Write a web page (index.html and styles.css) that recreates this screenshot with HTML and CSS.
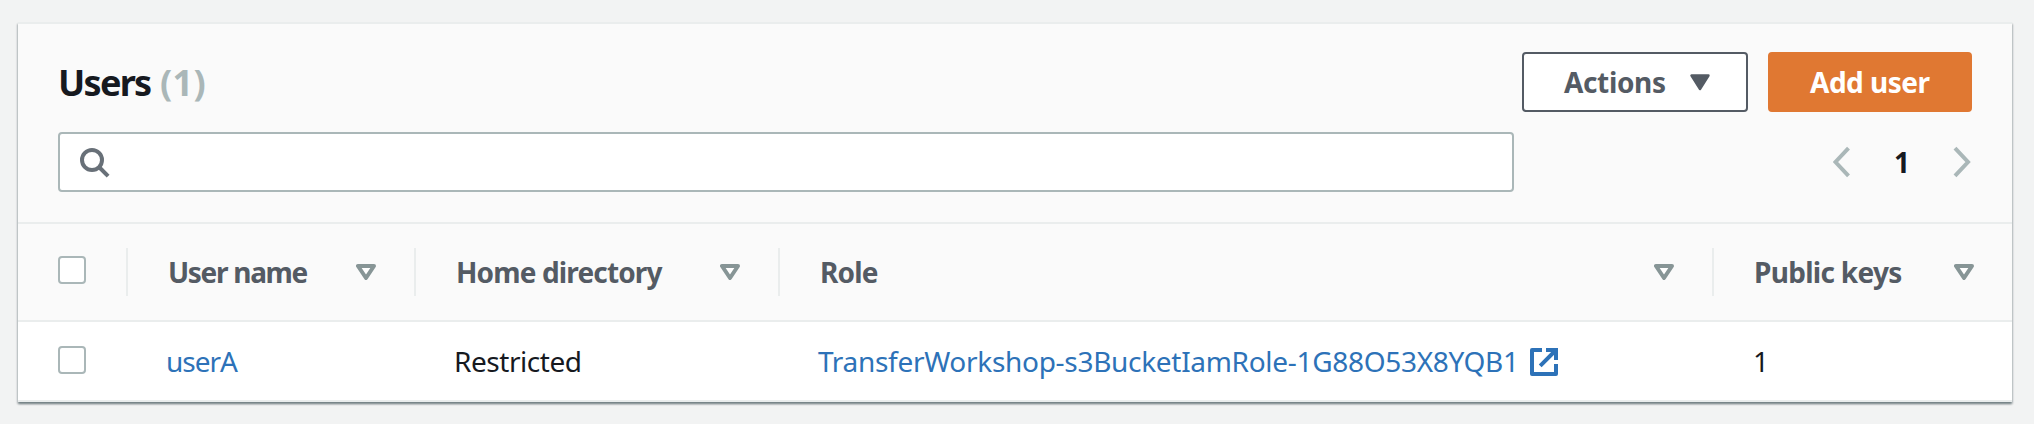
FILE: index.html
```html
<!DOCTYPE html>
<html lang="en">
<head>
<meta charset="utf-8">
<title>Users</title>
<link rel="stylesheet" href="styles.css">
</head>
<body>
<main class="card">
  <header class="card-header">
    <div class="title-row">
      <h2 class="title"><span class="title-text">Users</span><span class="count">(1)</span></h2>
      <div class="buttons">
        <button class="btn btn-normal"><span class="actions-label">Actions</span><svg class="caret" width="20" height="17" viewBox="0 0 20 17"><path d="M1.5 1.5h17L10 15z" fill="#545b64" stroke="#545b64" stroke-width="2.4" stroke-linejoin="round"/></svg></button>
        <button class="btn btn-primary"><span class="add-label">Add user</span></button>
      </div>
    </div>
    <div class="filter-row">
      <div class="search">
        <svg width="32" height="32" viewBox="0 0 32 32" fill="none" stroke="#687078" stroke-width="4"><circle cx="12" cy="12" r="10"/><path d="M19.5 19.5l8.6 8.6"/></svg>
      </div>
      <nav class="pagination">
        <svg width="18" height="32" viewBox="0 0 18 32" fill="none" stroke="#aab7b8" stroke-width="4"><path d="M15.5 2.2L2.5 16l13 13.8"/></svg>
        <span class="page">1</span>
        <svg width="18" height="32" viewBox="0 0 18 32" fill="none" stroke="#aab7b8" stroke-width="4"><path d="M2 2.2L15 16 2 29.8"/></svg>
      </nav>
    </div>
  </header>
  <section class="table">
    <div class="row head">
      <div class="cell check"><span class="checkbox"></span></div>
      <div class="cell"><span class="h-name">User name</span><svg class="sort" width="20" height="16" viewBox="0 0 20 16"><path d="M2 2h16l-8 12z"/></svg></div>
      <div class="cell"><span class="h-dir">Home directory</span><svg class="sort" width="20" height="16" viewBox="0 0 20 16"><path d="M2 2h16l-8 12z"/></svg></div>
      <div class="cell"><span class="h-role">Role</span><svg class="sort" width="20" height="16" viewBox="0 0 20 16"><path d="M2 2h16l-8 12z"/></svg></div>
      <div class="cell"><span class="h-keys">Public keys</span><svg class="sort" width="20" height="16" viewBox="0 0 20 16"><path d="M2 2h16l-8 12z"/></svg></div>
    </div>
    <div class="row body">
      <div class="cell check"><span class="checkbox"></span></div>
      <div class="cell"><a class="link user">userA</a></div>
      <div class="cell"><span class="dir">Restricted</span></div>
      <div class="cell"><a class="link role">TransferWorkshop-s3BucketIamRole-1G88O53X8YQB1</a><svg class="external" width="28" height="28" viewBox="0 0 28 28" fill="none" stroke="#2d72b8" stroke-width="4"><path d="M12 2H2v24h24V16" stroke-linejoin="round"/><path d="M16 2h10v10M26 2L10.2 17.8"/></svg></div>
      <div class="cell"><span class="keys">1</span></div>
    </div>
  </section>
</main>
</body>
</html>
```
FILE: styles.css
```css
* { box-sizing: border-box; }

body {
  margin: 0;
  padding: 22px 22px 22px 18px;
  background: #f2f3f3;
  color: #16191f;
  font: 400 28px/36px "Noto Sans", sans-serif;
}

svg { display: block; flex: none; }

.card {
  width: 1994px;
  height: 380px;
  background: #fff;
  border-top: 2px solid #eaeded;
  border-bottom: 2px solid #eaeded;
  box-shadow: 0 2px 2px 0 rgba(0, 28, 36, .4), 1px 2px 2px 0 rgba(0, 28, 36, .12), -1px 2px 2px 0 rgba(0, 28, 36, .12);
}

.card-header {
  height: 200px;
  padding: 28px 40px 0;
  background: #fafafa;
  border-bottom: 2px solid #eaeded;
}

.title-row, .filter-row, .buttons, .pagination, .btn, .cell { display: flex; align-items: center; }
.title-row, .filter-row { justify-content: space-between; }

.title {
  display: flex;
  margin: 0;
  padding-top: 2px;
  font-size: 36px;
  line-height: 58px;
}
.title-text { width: 102px; letter-spacing: -1.7px; }
.count { color: #aab7b8; letter-spacing: .4px; }

.buttons { gap: 20px; }
.btn {
  height: 60px;
  padding: 0 0 1px 40px;
  border: 2px solid #545b64;
  border-radius: 4px;
  background: #fff;
  color: #545b64;
  font: 700 28px/36px "Noto Sans", sans-serif;
}
.btn-normal { width: 226px; }
.actions-label { width: 126px; text-align: left; letter-spacing: -.35px; }
.caret { margin-top: 1px; }
.btn-primary {
  width: 204px;
  border-color: #e07832;
  background: #e07832;
  color: #fff;
}
.add-label { letter-spacing: -.5px; }

.filter-row { margin-top: 20px; }
.search {
  display: flex;
  align-items: center;
  width: 1456px;
  height: 60px;
  padding: 4px 20px 0;
  border: 2px solid #aab7b8;
  border-radius: 4px;
  background: #fff;
}
.pagination { padding-right: 1px; }
.page { width: 102px; padding: 0 0 1px 43px; font-weight: 700; }

.row {
  display: grid;
  grid-template-columns: 110px 288px 364px 934px 298px;
}
.head {
  height: 98px;
  background: #fafafa;
  border-bottom: 2px solid #eaeded;
  color: #545b64;
  font-weight: 700;
}
.body { height: 78px; }
.cell { position: relative; padding-left: 40px; white-space: nowrap; }
.head .cell { justify-content: space-between; padding: 0 40px 0 40px; }
.head .cell:last-child { padding-right: 38px; }
.head .cell:not(:last-child)::after {
  content: "";
  position: absolute;
  top: 24px;
  right: 0;
  width: 2px;
  height: 48px;
  background: #eaeded;
}
.head .check { padding-bottom: 4px; }
.body .check { padding-bottom: 2px; }
.checkbox {
  width: 28px;
  height: 28px;
  border: 2px solid #aab7b8;
  border-radius: 4px;
  background: #fff;
}
.sort { fill: #fff; stroke: #879596; stroke-width: 4px; stroke-linejoin: round; }

.h-name { letter-spacing: -1.3px; }
.h-dir { letter-spacing: -.85px; }
.h-role { letter-spacing: -.8px; }
.h-keys { letter-spacing: -.7px; }
.link { color: #2d72b8; }
.user { margin-left: -2px; letter-spacing: -1px; }
.dir { margin-left: -2px; letter-spacing: -.45px; }
.role { width: 712px; margin-left: -2px; letter-spacing: -.3px; }
.keys { margin-left: -1px; }
.external { margin-top: 2px; }
```
